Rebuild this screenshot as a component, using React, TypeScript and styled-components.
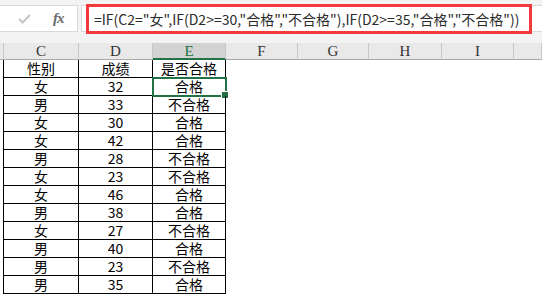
import React from "react"
import styled, { createGlobalStyle } from "styled-components"

const GlobalStyle = createGlobalStyle`
  body {
    margin: 0;
    background: #ffffff;
    font-family: "Noto Sans CJK SC", "Liberation Sans", sans-serif;
  }
`

const Page = styled.div`
  width: 542px;
  height: 302px;
  overflow: hidden;
  background: #ffffff;
`

const FormulaBar = styled.div`
  height: 43px;
  box-sizing: border-box;
  padding-top: 5px;
  display: flex;
  align-items: flex-start;
  gap: 3px;
  background: #f3f3f3;
`

const Controls = styled.div`
  width: 78px;
  height: 27px;
  box-sizing: border-box;
  background: #ffffff;
  border: 1px solid #d9d9d9;
  border-left: none;
  display: flex;
  align-items: center;
  padding-left: 18px;
  gap: 22px;
`

const FxLabel = styled.span`
  font-family: "Liberation Serif", serif;
  font-style: italic;
  font-weight: bold;
  font-size: 15px;
  color: #6b6b6b;
  letter-spacing: -1px;
`

const FormulaBox = styled.div`
  position: relative;
  flex: 1;
  height: 27px;
  box-sizing: border-box;
  background: #ffffff;
  border: 1px solid #d9d9d9;
  border-right: none;
  display: flex;
  align-items: center;
  padding-left: 12px;
`

const Formula = styled.span`
  font-size: 14px;
  line-height: 18px;
  color: #2b2b2b;
  white-space: nowrap;
`

const Highlight = styled.div`
  position: absolute;
  left: 4px;
  top: -2px;
  width: 446px;
  height: 30px;
  box-sizing: border-box;
  border: 3px solid #f23a3c;
  pointer-events: none;
`

const Sheet = styled.div`
  display: grid;
  grid-template-columns: 4px 75px 74px 73px 72px 71px 73px 72px 1fr;
  grid-template-rows: 17px repeat(13, 18px);
`

const HeaderCell = styled.div<{ $active?: boolean }>`
  box-sizing: border-box;
  background: ${p => (p.$active ? "#d3d3d3" : "#e9e9e9")};
  border-right: 1px solid #c8c8c8;
  border-bottom: ${p => (p.$active ? "2px solid #217346" : "1px solid #a9a9a9")};
  color: ${p => (p.$active ? "#217346" : "#333333")};
  font-family: "Liberation Serif", serif;
  font-size: 15px;
  line-height: 16px;
  text-align: center;
`

const Cell = styled.div<{ $ruled?: boolean }>`
  position: relative;
  box-sizing: border-box;
  border-right: ${p => (p.$ruled ? "1px solid #000000" : "none")};
  border-bottom: ${p => (p.$ruled ? "1px solid #000000" : "none")};
  font-size: 14px;
  line-height: 17px;
  color: #000000;
  text-align: center;
  white-space: nowrap;
`

const Stub = styled.div`
  border-right: 1px solid #000000;
`

const Selection = styled.div`
  position: absolute;
  left: -1px;
  top: -1px;
  width: 75px;
  height: 20px;
  box-sizing: border-box;
  border: 2px solid #217346;
`

const Handle = styled.div`
  position: absolute;
  right: -4px;
  bottom: -4px;
  width: 6px;
  height: 6px;
  background: #217346;
  border: 1px solid #ffffff;
`

const CheckIcon = () => (
  <svg width="13" height="10" viewBox="0 0 13 10">
    <polyline points="1,5 4.5,8.5 12,1" fill="none" stroke="#c4c4c4" strokeWidth="2" />
  </svg>
)

const columns = ["C", "D", "E", "F", "G", "H", "I", ""]

const rows: [string, string, string][] = [
  ["性别", "成绩", "是否合格"],
  ["女", "32", "合格"],
  ["男", "33", "不合格"],
  ["女", "30", "合格"],
  ["女", "42", "合格"],
  ["男", "28", "不合格"],
  ["女", "23", "不合格"],
  ["女", "46", "合格"],
  ["男", "38", "合格"],
  ["女", "27", "不合格"],
  ["男", "40", "合格"],
  ["男", "23", "不合格"],
  ["男", "35", "合格"],
]

const App = () => {
  return (
    <Page>
      <GlobalStyle />
      <FormulaBar>
        <Controls>
          <CheckIcon />
          <FxLabel>fx</FxLabel>
        </Controls>
        <FormulaBox>
          <Formula>=IF(C2="女",IF(D2&gt;=30,"合格","不合格"),IF(D2&gt;=35,"合格","不合格"))</Formula>
          <Highlight />
        </FormulaBox>
      </FormulaBar>
      <Sheet>
        <HeaderCell />
        {columns.map(c => (
          <HeaderCell key={c || "rest"} $active={c === "E"}>
            {c}
          </HeaderCell>
        ))}
        {rows.map((r, i) => (
          <React.Fragment key={i}>
            <Stub />
            <Cell $ruled>{r[0]}</Cell>
            <Cell $ruled>{r[1]}</Cell>
            <Cell $ruled>
              {r[2]}
              {i === 1 && (
                <Selection>
                  <Handle />
                </Selection>
              )}
            </Cell>
            <Cell />
            <Cell />
            <Cell />
            <Cell />
            <Cell />
          </React.Fragment>
        ))}
      </Sheet>
    </Page>
  )
}

export default App
